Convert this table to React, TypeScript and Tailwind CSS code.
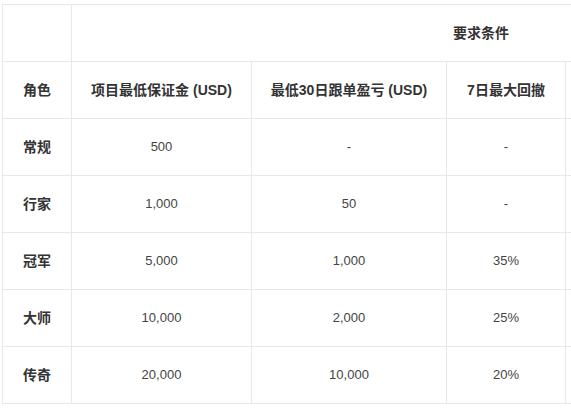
export default function App() {
  const rows = [
    { role: "常规", margin: "500", profit: "-", drawdown: "-" },
    { role: "行家", margin: "1,000", profit: "50", drawdown: "-" },
    { role: "冠军", margin: "5,000", profit: "1,000", drawdown: "35%" },
    { role: "大师", margin: "10,000", profit: "2,000", drawdown: "25%" },
    { role: "传奇", margin: "20,000", profit: "10,000", drawdown: "20%" },
  ];

  const cell = "border border-[#e8e8e8] text-center align-middle";
  const head = `${cell} text-[14px] font-bold text-[#333]`;

  return (
    <div className="h-[408px] w-[571px] overflow-hidden bg-white pl-[2px] pt-[4px] font-['Liberation_Sans','Noto_Sans_CJK_SC',sans-serif] text-[13px]">
      <table className="w-[888px] table-fixed border-collapse">
        <colgroup>
          <col className="w-[69px]" />
          <col className="w-[180px]" />
          <col className="w-[195px]" />
          <col className="w-[119px]" />
          <col className="w-[325px]" />
        </colgroup>
        <thead>
          <tr className="h-[57px]">
            <th className={cell}></th>
            <th colSpan={4} className={head}>
              要求条件
            </th>
          </tr>
          <tr className="h-[57px]">
            <th className={head}>角色</th>
            <th className={head}>项目最低保证金 (USD)</th>
            <th className={head}>最低30日跟单盈亏 (USD)</th>
            <th className={head}>7日最大回撤</th>
            <th className={cell}></th>
          </tr>
        </thead>
        <tbody>
          {rows.map((r) => (
            <tr key={r.role} className="h-[57px]">
              <td className={head}>{r.role}</td>
              <td className={`${cell} text-[#444]`}>{r.margin}</td>
              <td className={`${cell} text-[#444]`}>{r.profit}</td>
              <td className={`${cell} text-[#444]`}>{r.drawdown}</td>
              <td className={cell}></td>
            </tr>
          ))}
        </tbody>
      </table>
    </div>
  );
}
